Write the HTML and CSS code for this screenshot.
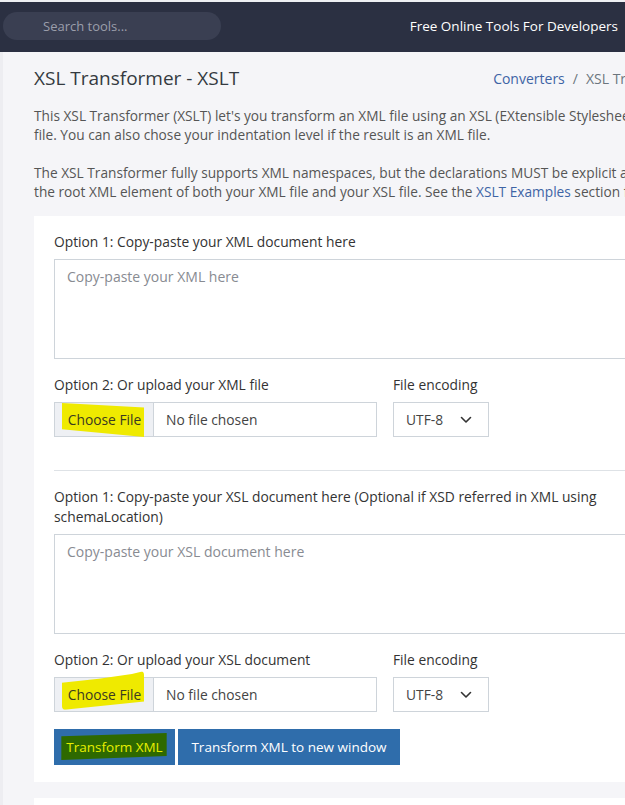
FILE: index.html
```html
<!DOCTYPE html>
<html lang="en">
<head>
<meta charset="utf-8">
<title>XSL Transformer - XSLT</title>
<link rel="stylesheet" href="styles.css">
</head>
<body>
<header class="navbar">
  <div class="search"><span class="search-ph">Search tools...</span></div>
  <div class="brand">Free Online Tools For Developers</div>
</header>
<main class="main">
  <div class="page-head">
    <h1 class="title">XSL Transformer - XSLT</h1>
    <nav class="crumbs"><a class="crumb-link">Converters</a><span class="sep">/</span><span class="crumb-cur">XSL Transformer - XSLT</span></nav>
  </div>
  <p class="intro">This XSL Transformer (XSLT) let's you transform an XML file using an XSL (EXtensible Stylesheet Language)<br>file. You can also chose your indentation level if the result is an XML file.</p>
  <p class="intro intro-last">The XSL Transformer fully supports XML namespaces, but the declarations MUST be explicit and MUST be on<br>the root XML element of both your XML file and your XSL file. See the <a class="link">XSLT Examples</a> section for more details.</p>

  <section class="card">
    <div class="group">
      <label class="lbl">Option 1: Copy-paste your XML document here</label>
      <div class="textarea"><span class="ph">Copy-paste your XML here</span></div>
    </div>
    <div class="row">
      <div class="col">
        <label class="lbl">Option 2: Or upload your XML file</label>
        <div class="file">
          <span class="file-btn"><span class="hl hl-a">Choose File</span></span>
          <span class="file-name">No file chosen</span>
        </div>
      </div>
      <div class="col">
        <label class="lbl">File encoding</label>
        <div class="select"><span>UTF-8</span><svg class="chev" width="12" height="8" viewBox="0 0 12 8"><path d="M1.5 1.5 L6 6 L10.5 1.5" fill="none" stroke="#333" stroke-width="1.6" stroke-linecap="round" stroke-linejoin="round"/></svg></div>
      </div>
    </div>
    <hr class="rule">
    <div class="group">
      <label class="lbl">Option 1: Copy-paste your XSL document here (Optional if XSD referred in XML using<br>schemaLocation)</label>
      <div class="textarea"><span class="ph">Copy-paste your XSL document here</span></div>
    </div>
    <div class="row">
      <div class="col">
        <label class="lbl">Option 2: Or upload your XSL document</label>
        <div class="file">
          <span class="file-btn"><span class="hl hl-b">Choose File</span></span>
          <span class="file-name">No file chosen</span>
        </div>
      </div>
      <div class="col">
        <label class="lbl">File encoding</label>
        <div class="select"><span>UTF-8</span><svg class="chev" width="12" height="8" viewBox="0 0 12 8"><path d="M1.5 1.5 L6 6 L10.5 1.5" fill="none" stroke="#333" stroke-width="1.6" stroke-linecap="round" stroke-linejoin="round"/></svg></div>
      </div>
    </div>
    <div class="buttons">
      <button class="btn btn-main"><span class="hl hl-green">Transform XML</span></button>
      <button class="btn btn-new">Transform XML to new window</button>
    </div>
  </section>
  <section class="card card-next"></section>
</main>
</body>
</html>
```

FILE: styles.css
```css
* { box-sizing: border-box; }
html, body { margin: 0; padding: 0; }
body {
  width: 625px;
  height: 805px;
  overflow: hidden;
  background: #f5f5f8;
  font-family: "Open Sans", "Noto Sans", sans-serif;
  color: #3a3a3a;
}
.navbar {
  height: 52px;
  border-top: 2px solid #eef0f3;
  background: #2b3042;
  display: flex;
  align-items: center;
  justify-content: space-between;
  padding: 0 7px 2px 3px;
}
.search {
  width: 218px;
  height: 28px;
  border-radius: 14px;
  background: #3a3f52;
  display: flex;
  align-items: center;
  padding-left: 40px;
}
.search-ph { color: #9a9eab; font-size: 13px; }
.brand { color: #fff; font-size: 13.5px; font-weight: 500; }

.main {
  width: 820px;
  padding-left: 31px;
  border-left: 3px solid #ededf1;
}
.page-head {
  display: flex;
  align-items: center;
  gap: 254px;
  height: 52px;
}
.title { margin: 0; font-size: 19px; font-weight: 400; color: #343a40; white-space: nowrap; }
.crumbs { font-size: 14px; color: #6c757d; display: flex; gap: 8px; white-space: nowrap; }
.crumb-link { color: #3e64a5; }
.sep { color: #6c757d; }
.intro {
  margin: 3px 0 20px 0;
  font-size: 13.7px;
  line-height: 18.5px;
  color: #555;
  white-space: nowrap;
}
.intro-last { margin-bottom: 0; }
.link { color: #3e64a5; }

.card {
  background: #fff;
  padding: 16px 20px 17px 20px;
  margin-top: 15px;
}
.lbl {
  display: block;
  font-size: 13.8px;
  line-height: 20px;
  color: #333;
  margin-bottom: 7px;
  white-space: nowrap;
}
.group { margin-bottom: 16px; }
.textarea {
  height: 100px;
  border: 1px solid #ced4da;
  padding: 7px 12px;
  font-size: 14px;
  line-height: 20px;
}
.ph { color: #888b92; }
.row { display: flex; gap: 16px; }
.file {
  width: 323px;
  height: 35px;
  border: 1px solid #ced4da;
  display: flex;
  align-items: center;
}
.file-btn {
  width: 99px;
  height: 100%;
  background: #eef0f4;
  border-right: 1px solid #ced4da;
  display: flex;
  align-items: center;
  justify-content: center;
  font-size: 13.8px;
  color: #333;
}
.hl {
  position: relative;
  z-index: 0;
  display: inline-block;
}
.hl::before {
  content: "";
  position: absolute;
  z-index: -1;
}
.hl-a, .hl-b { color: #3a3a20; padding-left: 1px; }
.hl-a::before {
  left: -5px; right: -3px; top: -8px; bottom: -8px;
  background: #efea00;
  clip-path: polygon(0 3%, 100% 16%, 100% 100%, 0 78%);
}
.hl-b::before {
  left: -5px; right: -3px; top: -14px; bottom: -6px;
  background: #efea00;
  clip-path: polygon(0 30%, 45% 20%, 85% 8%, 100% 0, 100% 78%, 0 100%);
  border-radius: 4px;
}
.file-name { padding-left: 12px; font-size: 13.8px; color: #444; }
.select {
  width: 96px;
  height: 35px;
  border: 1px solid #ced4da;
  display: flex;
  align-items: center;
  justify-content: space-between;
  padding: 0 16px 0 12px;
  font-size: 13.8px;
  color: #444;
}
.rule {
  border: 0;
  border-top: 1px solid #dee2e6;
  margin: 33px 0 16px 0;
}
.buttons { display: flex; gap: 3px; margin-top: 17px; }
.btn {
  height: 36px;
  border: 0;
  background: #2f6dab;
  color: #fff;
  font-family: inherit;
  font-size: 13.5px;
  padding: 0;
  display: flex;
  align-items: center;
  justify-content: center;
}
.btn-main { width: 121px; }
.btn-new { width: 222px; }
.hl-green { color: #e8ef00; }
.hl-green::before {
  left: -5px; right: -4px; top: -5px; bottom: -4px;
  background: #2e6900;
  clip-path: polygon(0 12%, 100% 0, 100% 85%, 0 100%);
}
.card-next { height: 40px; margin-top: 16px; }
```
